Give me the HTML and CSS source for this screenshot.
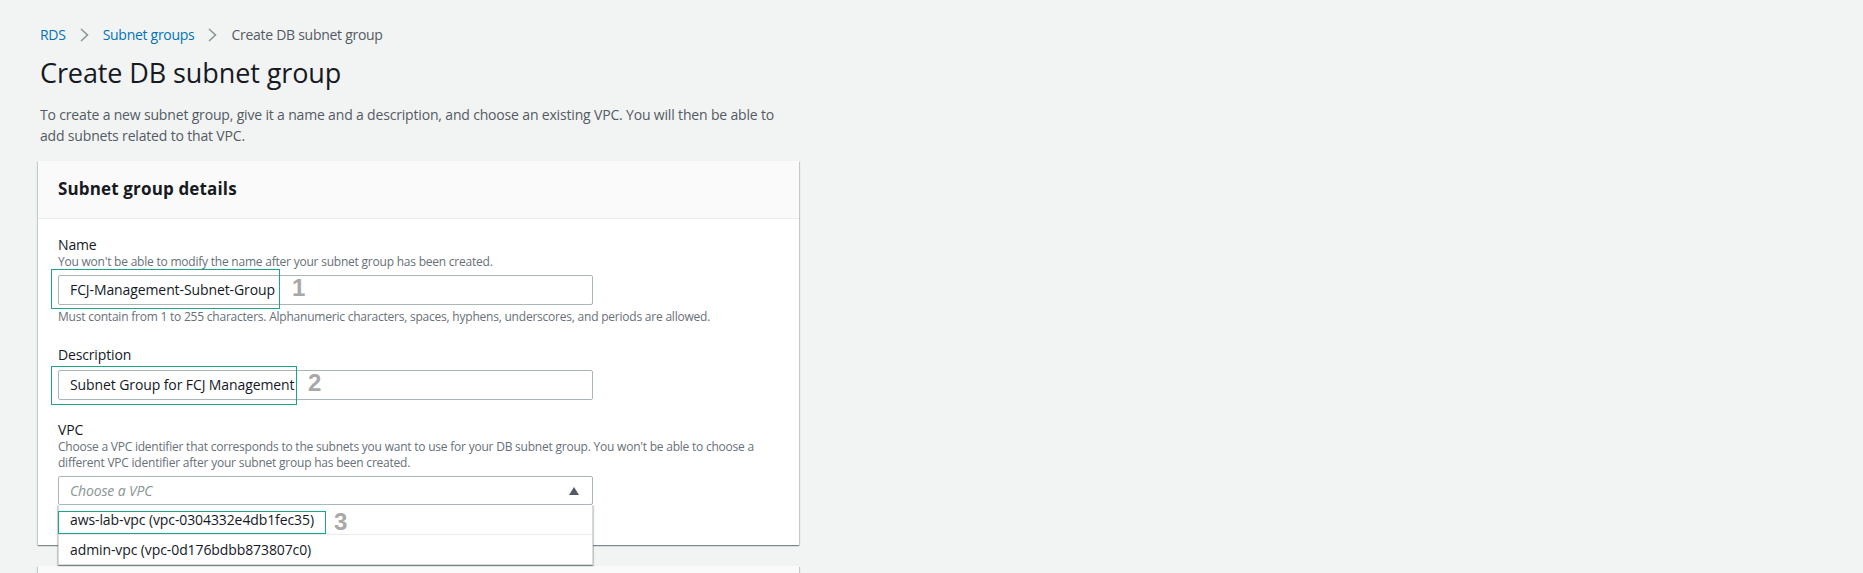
FILE: index.html
```html
<!DOCTYPE html>
<html lang="en">
<head>
<meta charset="utf-8">
<title>Create DB subnet group</title>
<link rel="stylesheet" href="styles.css">
</head>
<body>
<div class="page">
  <nav class="crumbs">
    <a class="crumb-link" href="#">RDS</a>
    <svg class="chev" viewBox="0 0 9 14"><path d="M1 1 L7.5 7 L1 13" /></svg>
    <a class="crumb-link" href="#">Subnet groups</a>
    <svg class="chev" viewBox="0 0 9 14"><path d="M1 1 L7.5 7 L1 13" /></svg>
    <span class="crumb-current">Create DB subnet group</span>
  </nav>
  <h1 class="title">Create DB subnet group</h1>
  <p class="intro">To create a new subnet group, give it a name and a description, and choose an existing VPC. You will then be able to add subnets related to that VPC.</p>

  <section class="card">
    <div class="card-head"><h2 class="card-title">Subnet group details</h2></div>
    <div class="card-body">
      <div class="field">
        <div class="label">Name</div>
        <div class="hint">You won't be able to modify the name after your subnet group has been created.</div>
        <div class="control control-after-hint">
          <div class="input">FCJ-Management-Subnet-Group</div>
          <span class="mark mark-name"></span>
          <span class="num num-name">1</span>
        </div>
        <div class="hint hint-after">Must contain from 1 to 255 characters. Alphanumeric characters, spaces, hyphens, underscores, and periods are allowed.</div>
      </div>

      <div class="field field-desc">
        <div class="label">Description</div>
        <div class="control control-after-label">
          <div class="input">Subnet Group for FCJ Management</div>
          <span class="mark mark-desc"></span>
          <span class="num num-desc">2</span>
        </div>
      </div>

      <div class="field field-vpc">
        <div class="label">VPC</div>
        <div class="hint">Choose a VPC identifier that corresponds to the subnets you want to use for your DB subnet group. You won't be able to choose a different VPC identifier after your subnet group has been created.</div>
        <div class="control control-after-hint">
          <div class="select">
            <span class="placeholder">Choose a VPC</span>
            <span class="caret"></span>
          </div>
          <ul class="menu">
            <li class="menu-item menu-item-first">
              <span class="mark mark-vpc"></span>
              aws-lab-vpc (vpc-0304332e4db1fec35)
              <span class="num num-vpc">3</span>
            </li>
            <li class="menu-item">admin-vpc (vpc-0d176bdbb873807c0)</li>
          </ul>
        </div>
      </div>
    </div>
  </section>

  <section class="card card-next">
    <div class="card-head card-head-empty"></div>
  </section>
</div>
</body>
</html>
```
FILE: styles.css
```css
html, body {
  margin: 0;
  padding: 0;
}

body {
  background: #f2f3f3;
  font-family: "Open Sans", "Noto Sans", sans-serif;
  color: #16191f;
  letter-spacing: -0.15px;
  overflow: hidden;
}

.page {
  padding: 25px 0 0 38px;
}

.crumbs {
  display: flex;
  align-items: center;
  gap: 14px;
  padding-left: 2px;
  height: 20px;
  font-size: 14px;
  line-height: 20px;
  letter-spacing: -0.28px;
}

.crumb-link {
  color: #0073bb;
  text-decoration: none;
}

.crumb-current {
  color: #545b64;
}

.chev {
  width: 9px;
  height: 14px;
  fill: none;
  stroke: #879596;
  stroke-width: 1.5;
}

.title {
  margin: 10px 0 0;
  padding-left: 2px;
  font-size: 27px;
  line-height: 36px;
  font-weight: 400;
  letter-spacing: -0.1px;
  color: #16191f;
}

.intro {
  margin: 13px 0 0;
  padding-left: 2px;
  width: 750px;
  font-size: 14px;
  line-height: 21px;
  letter-spacing: -0.17px;
  color: #545b64;
}

.card {
  margin-top: 15px;
  width: 761px;
  background: #fff;
  box-shadow: 0 1px 1px 0 rgba(0, 28, 36, 0.3), 1px 1px 1px 0 rgba(0, 28, 36, 0.15), -1px 1px 1px 0 rgba(0, 28, 36, 0.15);
}

.card-head {
  background: #fafafa;
  border-bottom: 1px solid #eaeded;
  padding: 17px 20px 18px;
}

.card-title {
  margin: 0;
  font-size: 17px;
  line-height: 22px;
  font-weight: 700;
  letter-spacing: 0.15px;
}

.card-body {
  padding: 16px 20px 40px;
}

.label {
  font-size: 14px;
  line-height: 19px;
}

.hint {
  font-size: 12px;
  line-height: 16px;
  letter-spacing: -0.22px;
  color: #687078;
}

.hint-after {
  margin-top: 4px;
}

.field-desc {
  margin-top: 20px;
}

.field-vpc {
  margin-top: 20px;
}

.control {
  position: relative;
  width: 535px;
}

.control-after-hint {
  margin-top: 5px;
}

.control-after-label {
  margin-top: 6px;
}

.input {
  box-sizing: border-box;
  height: 30px;
  border: 1px solid #aab7b8;
  border-radius: 2px;
  padding: 0 11px;
  font-size: 14px;
  line-height: 28px;
  letter-spacing: -0.1px;
  color: #16191f;
  background: #fff;
}

.select {
  box-sizing: border-box;
  height: 29px;
  border: 1px solid #aab7b8;
  border-radius: 2px;
  padding: 0 13px 0 11px;
  display: flex;
  align-items: center;
  justify-content: space-between;
  background: #fff;
}

.placeholder {
  font-size: 14px;
  font-style: italic;
  color: #879596;
}

.caret {
  width: 0;
  height: 0;
  border-left: 5px solid transparent;
  border-right: 5px solid transparent;
  border-bottom: 8px solid #545b64;
}

.menu {
  position: absolute;
  top: 100%;
  left: 0;
  right: 0;
  margin: 0;
  padding: 0;
  list-style: none;
  background: #fff;
  border: 1px solid #d5dbdb;
  border-top: none;
  box-shadow: 0 1px 1px 0 rgba(0, 28, 36, 0.3), 1px 1px 1px 0 rgba(0, 28, 36, 0.15), -1px 1px 1px 0 rgba(0, 28, 36, 0.15);
  z-index: 2;
}

.menu-item {
  position: relative;
  height: 29px;
  line-height: 29px;
  padding: 0 11px;
  font-size: 14px;
  letter-spacing: -0.1px;
  color: #16191f;
}

.menu-item-first {
  border-bottom: 1px solid #eaeded;
}

.mark {
  position: absolute;
  box-sizing: border-box;
  border: 1px solid #1ba58a;
  pointer-events: none;
}

.mark-name {
  left: -7px;
  top: -6px;
  width: 229px;
  height: 40px;
}

.mark-desc {
  left: -7px;
  top: -4px;
  width: 246px;
  height: 39px;
}

.mark-vpc {
  left: -1px;
  top: 6px;
  width: 268px;
  height: 23px;
}

.num {
  position: absolute;
  font-family: "Liberation Sans", Arial, sans-serif;
  font-weight: 700;
  font-size: 24px;
  line-height: 24px;
  letter-spacing: 0;
  color: #a8a8a8;
}

.num-name {
  left: 234px;
  top: 1px;
}

.num-desc {
  left: 250px;
  top: 1px;
}

.num-vpc {
  left: 275px;
  top: 5px;
}

.card-next {
  margin-top: 21px;
}

.card-head-empty {
  height: 40px;
}
```
